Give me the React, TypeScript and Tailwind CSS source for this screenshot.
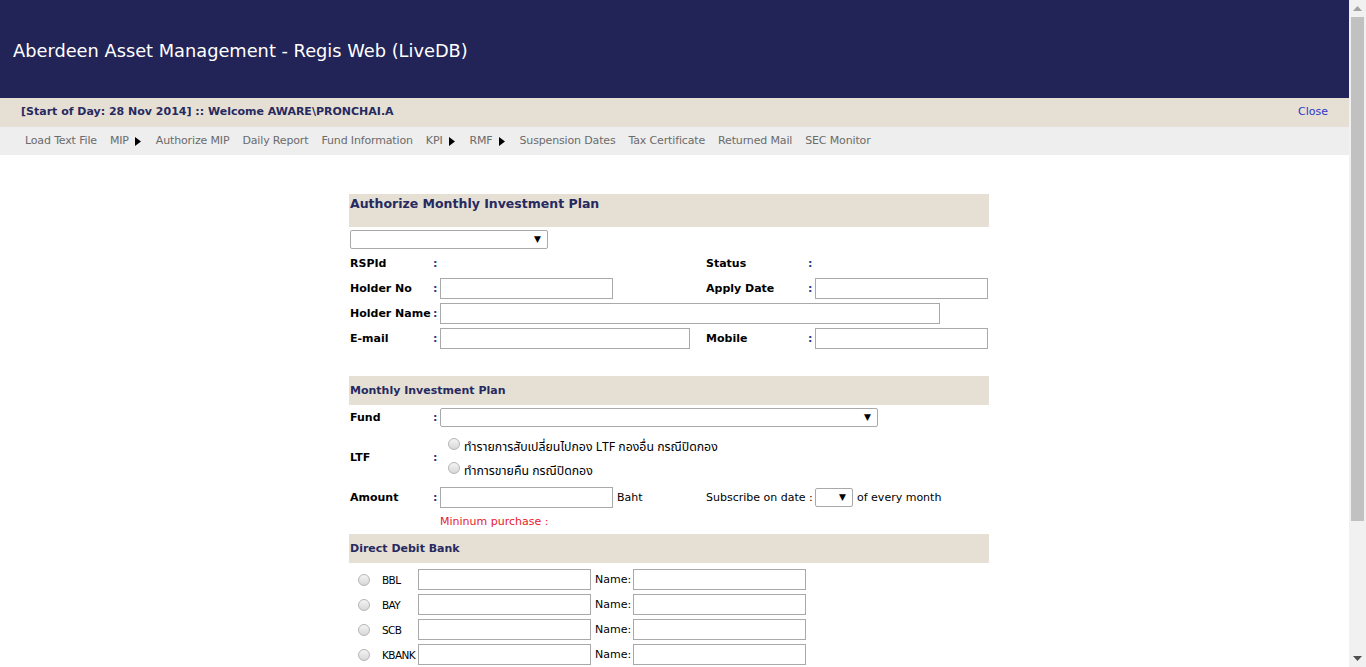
import React from "react";

const F = { fontFamily: '"DejaVu Sans", "Noto Sans", sans-serif' };

function Colon() {
  return <span className="w-[7px] pt-[2px] text-[#1f3c88] font-bold">:</span>;
}

function L({ w, children, bold = true }: { w: string; children?: React.ReactNode; bold?: boolean }) {
  return <span className={`${w} pt-[2px] ${bold ? "font-bold" : "font-normal"}`}>{children}</span>;
}

function Input({ w }: { w: string }) {
  return <div className={`${w} h-[21px] shrink-0 border border-[#a9a9a9] bg-white`} />;
}

function Select({ w, h = "h-[19px]" }: { w: string; h?: string }) {
  return (
    <div className={`${w} ${h} shrink-0 border border-[#a9a9a9] rounded-[2px] bg-white flex items-center justify-end pr-[6px]`}>
      <span className="text-[9px] leading-none text-black">▼</span>
    </div>
  );
}

function Radio() {
  return (
    <div className="w-[12px] h-[12px] rounded-full border border-[#b5b5b5] bg-gradient-to-b from-[#f4f4f4] to-[#d8d8d8]" />
  );
}

function Arrow() {
  return (
    <svg width="6" height="9" viewBox="0 0 6 9" className="ml-[6px]">
      <path d="M0 0 L6 4.5 L0 9 Z" fill="#000" />
    </svg>
  );
}

export default function App() {
  const banks = ["BBL", "BAY", "SCB", "KBANK", "KTB", "TMB"];
  return (
    <div className="h-[667px] overflow-hidden flex bg-white text-[11px] text-black" style={F}>
      <div className="flex-1 min-w-0">
        <div className="h-[98px] bg-[#222357] flex items-center pl-[13px] pt-[4px]">
          <span className="text-[17.8px] text-white">Aberdeen Asset Management - Regis Web (LiveDB)</span>
        </div>
        <div className="h-[29px] bg-[#e6e0d4] flex items-center justify-between pl-[21px] pr-[21px]">
          <span className="font-bold text-[11px] text-[#262a60]">[Start of Day: 28 Nov 2014] :: Welcome AWARE\PRONCHAI.A</span>
          <span className="text-[11px] text-[#2b35c9]">Close</span>
        </div>
        <div className="h-[28px] bg-[#eeeeee] flex items-center pl-[25px] gap-[13px] text-[11px] tracking-[-0.15px] text-[#6b6b6b]">
          <span>Load Text File</span>
          <span className="flex items-center pr-[2px]">MIP<Arrow /></span>
          <span>Authorize MIP</span>
          <span>Daily Report</span>
          <span>Fund Information</span>
          <span className="flex items-center pr-[2px]">KPI<Arrow /></span>
          <span className="flex items-center pr-[2px]">RMF<Arrow /></span>
          <span>Suspension Dates</span>
          <span>Tax Certificate</span>
          <span>Returned Mail</span>
          <span>SEC Monitor</span>
        </div>

        <div className="pt-[39px] pl-[349px]">
          <div className="w-[640px]">
            <div className="bg-[#e6e0d4] h-[33px] pt-[1px] pl-[1px] text-[12.5px] font-bold text-[#262a60]">
              Authorize Monthly Investment Plan
            </div>
            <div className="pt-[3px] pl-[1px]">
              <Select w="w-[198px]" />
            </div>
            <div className="flex flex-col gap-[4px] pt-[4px] pl-[1px] whitespace-nowrap">
              <div className="flex items-center h-[21px]">
                <L w="w-[83px]">RSPId</L>
                <Colon />
                <span className="w-[266px]" />
                <L w="w-[102px]">Status</L>
                <Colon />
              </div>
              <div className="flex items-center h-[21px]">
                <L w="w-[83px]">Holder No</L>
                <Colon />
                <Input w="w-[173px]" />
                <span className="w-[93px]" />
                <L w="w-[102px]">Apply Date</L>
                <Colon />
                <Input w="w-[173px]" />
              </div>
              <div className="flex items-center h-[21px]">
                <L w="w-[83px]">Holder Name</L>
                <Colon />
                <Input w="w-[500px]" />
              </div>
              <div className="flex items-center h-[21px]">
                <L w="w-[83px]">E-mail</L>
                <Colon />
                <Input w="w-[250px]" />
                <span className="w-[16px]" />
                <L w="w-[102px]">Mobile</L>
                <Colon />
                <Input w="w-[173px]" />
              </div>
            </div>

            <div className="mt-[27px] bg-[#e6e0d4] h-[29px] flex items-center pl-[1px] pt-[1px] text-[11px] font-bold text-[#262a60]">
              Monthly Investment Plan
            </div>
            <div className="pt-[3px] pl-[1px] whitespace-nowrap">
              <div className="flex items-center h-[19px]">
                <L w="w-[83px]">Fund</L>
                <Colon />
                <Select w="w-[438px]" />
              </div>
              <div className="flex items-center h-[50px] mt-[5px]">
                <L w="w-[83px]">LTF</L>
                <Colon />
                <div className="flex flex-col gap-[10px] pl-[8px] pt-[5px] font-normal" style={{ fontFamily: '"Noto Sans Thai", "Noto Sans", "DejaVu Sans", sans-serif' }}>
                  <div className="flex items-start gap-[4px]"><div className="mt-[-3px]"><Radio /></div><span className="text-[12.3px] leading-[14px]">ทำรายการสับเปลี่ยนไปกอง LTF กองอื่น กรณีปิดกอง</span></div>
                  <div className="flex items-start gap-[4px]"><div className="mt-[-3px]"><Radio /></div><span className="text-[12.3px] leading-[14px]">ทำการขายคืน กรณีปิดกอง</span></div>
                </div>
              </div>
              <div className="flex items-center h-[21px] mt-[5px]">
                <L w="w-[83px]">Amount</L>
                <Colon />
                <Input w="w-[173px]" />
                <L w="w-[93px] pl-[4px]" bold={false}>Baht</L>
                <L w="w-[109px]" bold={false}>Subscribe on date :</L>
                <Select w="w-[38px]" />
                <L w="pl-[4px]" bold={false}>of every month</L>
              </div>
              <div className="pl-[90px] pt-[6px] h-[26px] font-normal text-[#e8202a]">Mininum purchase :</div>
            </div>

            <div className="bg-[#e6e0d4] h-[29px] flex items-center pl-[1px] pt-[1px] text-[11px] font-bold text-[#262a60]">
              Direct Debit Bank
            </div>
            <div className="flex flex-col gap-[4px] pt-[6px] whitespace-nowrap">
              {banks.map((b) => (
                <div key={b} className="flex items-center h-[21px]">
                  <span className="pl-[9px] w-[33px]"><Radio /></span>
                  <span className="w-[36px] pt-[2px] text-[10.5px] tracking-[-0.6px]">{b}</span>
                  <Input w="w-[173px]" />
                  <span className="w-[42px] pl-[4px] pt-[2px]">Name:</span>
                  <Input w="w-[173px]" />
                </div>
              ))}
            </div>
          </div>
        </div>
      </div>

      <div className="w-[17px] shrink-0 bg-[#f1f1f1] flex flex-col items-center">
        <div className="h-[17px] flex items-center justify-center">
          <svg width="9" height="5" viewBox="0 0 9 5"><path d="M0 5 L4.5 0 L9 5 Z" fill="#a3a3a3" /></svg>
        </div>
        <div className="w-[13px] h-[504px] bg-[#c1c1c1]" />
        <div className="flex-1" />
        <div className="h-[17px] flex items-center justify-center">
          <svg width="9" height="5" viewBox="0 0 9 5"><path d="M0 0 L9 0 L4.5 5 Z" fill="#505050" /></svg>
        </div>
      </div>
    </div>
  );
}
